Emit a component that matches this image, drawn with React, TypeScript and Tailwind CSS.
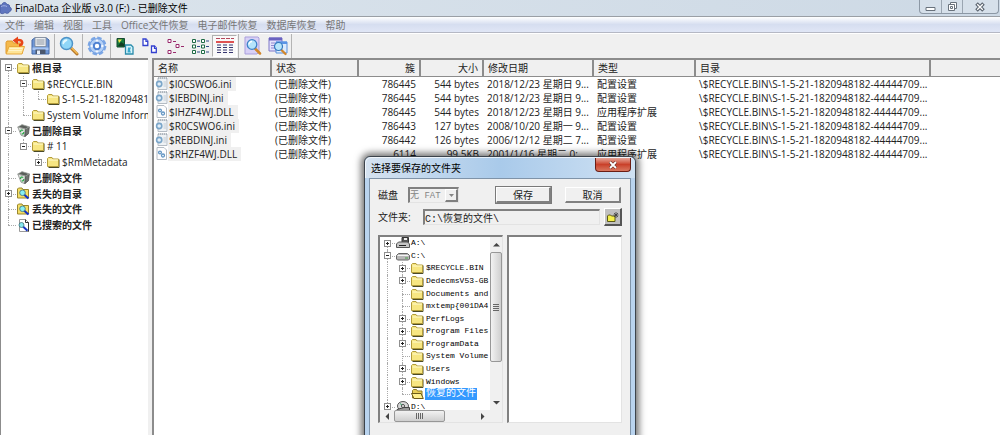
import clsx from "clsx";
import type { ReactNode } from "react";

/* ---------- toolbar icons ---------- */

const OpenIcon = () => (
  <svg width="21" height="20" viewBox="0 0 21 20">
    <path d="M1 6.500 2 5h5l1.500 2H17v10.500H1z" fill="#f5b94a" stroke="#e09a2c" />
    <path d="M4 10.500h15.500L17 18H1.200z" fill="#ffe596" stroke="#e8a83a" />
    <path d="M4.500 12.500h13M3.800 14.500h13" stroke="#fff4c8" />
    <path d="M14 9.500c4.500-1 4.500-5.500-1-5.500" fill="none" stroke="#e8451a" strokeWidth="2.400" />
    <path d="m7.500 4.500 5.500-4v8z" fill="#e8451a" />
  </svg>
);

const SaveIcon = () => (
  <svg width="19" height="20" viewBox="0 0 19 20">
    <path d="M1 4 3.500 2h12L18 4v14H1z" fill="#6f97d6" stroke="#4269a8" />
    <path d="M4 1.500h11v9H4z" fill="#eceff3" stroke="#7c8794" strokeWidth=".8" />
    <path d="M5.500 4h8M5.500 6h8M5.500 8h8" stroke="#8a94a0" />
    <path d="M1.500 11.500h16V14h-16z" fill="#a9c6f2" />
    <path d="M4.500 13.500h10V18h-10z" fill="#4b586e" />
    <path d="M6 14.500h3V18H6z" fill="#e8eef8" />
  </svg>
);

const Magnifier = () => (
  <svg width="20" height="20" viewBox="0 0 20 20">
    <path d="m12 12 6 6" stroke="#b5782a" strokeWidth="3" strokeLinecap="round" />
    <path d="m12.500 11.800 5.500 5.500" stroke="#f2b850" strokeWidth="1.500" strokeLinecap="round" />
    <circle cx="7.500" cy="7.500" r="6" fill="#8fd6f8" stroke="#4d93c8" strokeWidth="1.500" />
    <path d="M3.500 7.500a4 4 0 0 1 4-4.200c1.500 0 1 1.500 0 2S5 7 4.500 8.500z" fill="#e6f9ff" />
  </svg>
);

const GearIcon = () => (
  <svg width="20" height="20" viewBox="0 0 20 20">
    <circle cx="10" cy="10" r="8.200" fill="#a9c9f3" stroke="#7ba6e4" strokeWidth="2.400" strokeDasharray="4.400 2.040" />
    <circle cx="10" cy="10" r="7.200" fill="#b4d0f5" stroke="#6c9be0" strokeWidth=".8" />
    <g fill="#f4f8fe">
      <circle cx="10" cy="4.800" r="1.300" />
      <circle cx="10" cy="15.200" r="1.300" />
      <circle cx="4.800" cy="10" r="1.300" />
      <circle cx="15.200" cy="10" r="1.300" />
    </g>
    <circle cx="10" cy="10" r="3.200" fill="#fff" stroke="#4f82d2" strokeWidth="2" />
  </svg>
);

const LargeIconsIcon = () => (
  <svg width="18" height="18" viewBox="0 0 18 18">
    <path d="M1 1.500h7.500V10H1z" fill="#157a3c" stroke="#174a30" />
    <path d="M2 2.500h4L3 6z" fill="#f3e34d" />
    <path d="m2 9 3-4 3 2v2.500z" fill="#123d22" />
    <path d="M9.500 8H15l2 2v7H9.500z" fill="#d8f4fb" stroke="#2a8cab" strokeWidth="1.300" />
    <path d="M12 10.500h3l-1 2.500 1 2.500h-3.500z" fill="#36a9cd" />
  </svg>
);

const SmallIconsIcon = () => (
  <svg width="18" height="18" viewBox="0 0 18 18" fill="#fff" stroke="#3340cf" strokeWidth="1.300">
    <path d="M2 2h3l1.800 2v4.500H2z" />
    <path d="M5 2v2.300h2" />
    <path d="M10.500 9h3l1.800 2v4.500h-4.800z" />
    <path d="M13.500 9v2.300h2" />
  </svg>
);

const ListIcon = () => (
  <svg width="18" height="18" viewBox="0 0 18 18" fill="#fff" stroke="#9a2a6c">
    <path d="M2 2.500h3v3H2zM10 7.500h3v3h-3zM2 13.500h3v3H2z" />
    <path d="M7 4.500h3M15 9.500h3M7 15.500h3" strokeWidth="1.200" />
  </svg>
);

const ColumnsIcon = () => (
  <svg width="18" height="18" viewBox="0 0 18 18" fill="#fff" stroke="#1f6b45">
    <path d="M1.500 2.500h3v3h-3zM10.500 2.500h3v3h-3zM1.500 8h3v3h-3zM10.500 8h3v3h-3zM1.500 13.500h3v3h-3zM10.500 13.500h3v3h-3z" />
    <path d="M6 4h3M15 4h3M6 9.500h3M15 9.500h3M6 15h3M15 15h3" stroke="#2e4d86" />
  </svg>
);

const DetailsIcon = () => (
  <svg width="20" height="18" viewBox="0 0 20 18">
    <path d="M1 1.500h18" stroke="#b5475a" strokeDasharray="4 1" />
    <path d="M1 5h18" stroke="#d61a1a" strokeWidth="1.500" />
    <path d="M2 8h17M2 10.500h17M2 13h17M2 15.500h17" stroke="#35356f" strokeDasharray="4 2" />
  </svg>
);

const PreviewIcon = () => (
  <svg width="20" height="20" viewBox="0 0 20 20">
    <path d="M2 1h13l1 1v14l-2 2H2z" fill="#d8d0f6" stroke="#a99fdc" />
    <path d="m12 12.500 5 5" stroke="#d2862a" strokeWidth="2.500" strokeLinecap="round" />
    <circle cx="9" cy="8.500" r="4.800" fill="#b5e4fb" stroke="#3f83c8" strokeWidth="1.300" />
    <path d="M6 8.500A3 3 0 0 1 9 5.500" stroke="#fff" strokeWidth="1.300" fill="none" />
  </svg>
);

const FindIcon = () => (
  <svg width="20" height="20" viewBox="0 0 20 20">
    <path d="M1 2h13v13H1z" fill="#e5e2fb" stroke="#7f78c9" />
    <path d="M1 1.500h13v3H1z" fill="#6a62c0" />
    <path d="M3 7h4M3 9.500h3M3 12h4" stroke="#8f89d0" />
    <path d="M8 6h11v11H8z" fill="#dcebfd" stroke="#5a8fdc" />
    <path d="M8 5.500h11V8H8z" fill="#5a94e6" />
    <path d="m13 13.500 4.500 4.500" stroke="#d2862a" strokeWidth="2.300" strokeLinecap="round" />
    <circle cx="10.500" cy="10.500" r="4" fill="#b8e6fb" stroke="#3577bd" strokeWidth="1.200" />
  </svg>
);

/* ---------- tree icons ---------- */

const Folder = () => (
  <svg width="13" height="12" viewBox="0 0 13 12">
    <path d="M1.500 11.500h10.500V3.500" fill="none" stroke="#4a4a28" />
    <path d="M.5 10.500V2.500l1-1h3.500l1 1.500h5.500v7.500z" fill="#f7e682" stroke="#b39c3a" />
    <path d="M1.500 4h9.500" stroke="#fffbd0" />
  </svg>
);

const OpenFolder = () => (
  <svg width="13" height="12" viewBox="0 0 13 12">
    <path d="M1.500 10V2.500l1-1h3l1 1.500h4.500v7z" fill="#e8cf58" stroke="#8f7a22" />
    <path d="M.5 5.500h9.500l2.300 5H3z" fill="#fff08c" stroke="#6b5b1a" />
  </svg>
);

const RecycleBin = () => (
  <svg width="13" height="13" viewBox="0 0 13 13">
    <path d="M.8 3 4 11.200l3.800 1.500L8.500 5z" fill="#dfe2df" stroke="#7b807b" strokeWidth=".7" />
    <path d="M8.500 5 7.800 12.700l3.700-3L12.300 3z" fill="#6e726e" stroke="#444" strokeWidth=".7" />
    <path d="M.8 3 5 .6l7.300 2.200L8.500 5z" fill="#5a5e5a" stroke="#a5aaa5" strokeWidth=".8" />
    <path d="M3.500 8c0-2 1.300-2.500 2.700-1.500M6.800 8c0 1.700-1 2.200-2.200 1.800" fill="none" stroke="#28a846" strokeWidth="1.200" />
  </svg>
);

const LostFolder = () => (
  <svg width="13" height="13" viewBox="0 0 13 13">
    <path d="M.5 11V2l1-1h3.500l1 1.500h5.500V11z" fill="#f5df66" stroke="#9a862c" />
    <path d="m7 7.500 4.500 4" stroke="#1432c4" strokeWidth="2.200" />
    <circle cx="5.500" cy="5.800" r="2.800" fill="#86f0f4" stroke="#3b6f78" strokeWidth=".8" />
  </svg>
);

const SearchedFile = () => (
  <svg width="13" height="13" viewBox="0 0 13 13">
    <path d="M2.500.5h6l3 3v9h-9z" fill="#fff" stroke="#999" />
    <path d="M8.500.5v3h3v9" fill="none" stroke="#333" />
    <path d="m6 7.500 4.500 4.300" stroke="#1432c4" strokeWidth="2" />
    <circle cx="4.500" cy="6" r="2.500" fill="#86e8f0" stroke="#3b6f78" strokeWidth=".8" />
  </svg>
);

const Floppy = () => (
  <svg width="14" height="12" viewBox="0 0 14 12">
    <path d="M6 .5h6.500v5H6z" fill="#555" stroke="#333" />
    <path d="M8 1h3v2H8z" fill="#eee" />
    <path d="m.5 7 2-2h9l2 2v3.500H.5z" fill="#c4c4c4" stroke="#555" />
    <path d="M3 8.500h7" stroke="#222" />
  </svg>
);

const Disk = () => (
  <svg width="14" height="12" viewBox="0 0 14 12">
    <path d="m.5 5.500 2-2h9l2 2v3.500l-1 1h-11l-1-1z" fill="#b8b8b8" stroke="#666" />
    <path d="M1.500 5.500h11" stroke="#f5f5f5" />
    <path d="M9 8h3" stroke="#4aa04a" />
  </svg>
);

const CdDrive = () => (
  <svg width="14" height="12" viewBox="0 0 14 12">
    <ellipse cx="7" cy="5" rx="5.500" ry="4.500" fill="#d7d7d7" stroke="#555" />
    <circle cx="7" cy="5" r="1.500" fill="#fff" stroke="#444" />
    <path d="M8 6.500h5.500v4H1V8.500z" fill="#999" stroke="#444" />
    <path d="M4 2.500 6 4" stroke="#39a06b" />
  </svg>
);

const IniFile = () => (
  <svg width="13" height="13" viewBox="0 0 13 13">
    <path d="M3 1h9v11.500H3z" fill="#eef2f5" stroke="#b4bcc4" />
    <path d="M3 1h9" stroke="#8a949e" strokeDasharray="1 1" />
    <circle cx="4.200" cy="7" r="2.600" fill="#e2eef8" stroke="#7ba6c9" strokeWidth="1.600" />
    <path d="M8.500 5h2.500M8.500 7h2.500M8.500 9h2.500" stroke="#c3ccd5" />
  </svg>
);

const DllFile = () => (
  <svg width="13" height="13" viewBox="0 0 13 13">
    <path d="M2 .5h7l2.500 2.500v9.500H2z" fill="#fdfdfe" stroke="#b4bcc4" />
    <circle cx="5" cy="5.500" r="1.400" fill="#fff" stroke="#6396c4" strokeWidth="1.300" />
    <circle cx="8" cy="8.500" r="1.500" fill="#fff" stroke="#6396c4" strokeWidth="1.300" />
  </svg>
);

/* ---------- tree ---------- */

type Node = {
  // one letter per level: | line, . blank, r root, t tee, l last
  guides: string;
  box?: "+" | "-";
  icon: ReactNode;
  label: string;
  bold?: boolean;
  selected?: boolean;
};

const dirTree: Node[] = [
  { guides: "r", box: "-", icon: <Folder />, label: "根目录", bold: true },
  { guides: "|t", box: "-", icon: <Folder />, label: "$RECYCLE.BIN" },
  { guides: "||l", icon: <Folder />, label: "S-1-5-21-18209481" },
  { guides: "|l", icon: <Folder />, label: "System Volume Inform" },
  { guides: "t", box: "-", icon: <RecycleBin />, label: "已删除目录", bold: true },
  { guides: "|l", box: "-", icon: <Folder />, label: "# 11" },
  { guides: "|.l", box: "+", icon: <Folder />, label: "$RmMetadata" },
  { guides: "t", icon: <RecycleBin />, label: "已删除文件", bold: true },
  { guides: "t", box: "+", icon: <LostFolder />, label: "丢失的目录", bold: true },
  { guides: "t", icon: <LostFolder />, label: "丢失的文件", bold: true },
  { guides: "l", icon: <SearchedFile />, label: "已搜索的文件", bold: true },
];

const driveTree: Node[] = [
  { guides: "r", box: "+", icon: <Floppy />, label: "A:\\" },
  { guides: "t", box: "-", icon: <Disk />, label: "C:\\" },
  { guides: "|t", box: "+", icon: <Folder />, label: "$RECYCLE.BIN" },
  { guides: "|t", box: "+", icon: <Folder />, label: "DedecmsV53-GB" },
  { guides: "|t", icon: <Folder />, label: "Documents and" },
  { guides: "|t", icon: <Folder />, label: "mxtemp{001DA4" },
  { guides: "|t", box: "+", icon: <Folder />, label: "PerfLogs" },
  { guides: "|t", box: "+", icon: <Folder />, label: "Program Files" },
  { guides: "|t", box: "+", icon: <Folder />, label: "ProgramData" },
  { guides: "|t", icon: <Folder />, label: "System Volume" },
  { guides: "|t", box: "+", icon: <Folder />, label: "Users" },
  { guides: "|t", box: "+", icon: <Folder />, label: "Windows" },
  { guides: "|l", icon: <OpenFolder />, label: "恢复的文件", selected: true },
  { guides: "t", box: "+", icon: <CdDrive />, label: "D:\\" },
];

function Guide({ kind, box, label }: { kind: string; box?: "+" | "-"; label: string }) {
  return (
    <span className="relative flex h-full w-[15px] shrink-0 items-center justify-center">
      {kind !== "." && (
        <span
          className={clsx(
            "absolute left-[7px] border-l border-dotted border-[#aaa]",
            kind === "r" ? "top-1/2" : "top-0",
            kind === "l" ? "bottom-1/2" : "bottom-0"
          )}
        />
      )}
      {"rtl".includes(kind) && (
        <span className="absolute right-0 left-[7px] top-1/2 border-t border-dotted border-[#aaa]" />
      )}
      {box && (
        <button
          type="button"
          aria-label={label}
          className="relative flex h-[7px] w-[7px] items-center justify-center border border-[#8f8f8f] bg-white"
        >
          <span className="absolute h-px w-[3px] bg-[#222]" />
          {box === "+" && <span className="absolute h-[3px] w-px bg-[#222]" />}
        </button>
      )}
    </span>
  );
}

function TreeRow({ node }: { node: Node }) {
  const last = node.guides.length - 1;
  return (
    <li className="flex min-h-0 items-center whitespace-nowrap">
      {node.guides.split("").map((kind, i) => (
        <Guide key={i} kind={kind} box={i === last ? node.box : undefined} label={node.label} />
      ))}
      <span className="flex w-[15px] shrink-0 justify-center">{node.icon}</span>
      <span
        className={clsx(
          "px-px leading-3",
          node.bold && "font-bold",
          node.selected && "bg-[#3399ff] text-white"
        )}
      >
        {node.label}
      </span>
    </li>
  );
}

/* ---------- file list ---------- */

const dir = "\\$RECYCLE.BIN\\S-1-5-21-1820948182-44444709...";

const files = [
  { name: "$I0CSWO6.ini", cluster: "786445", size: "544 bytes", date: "2018/12/23 星期日 9...", type: "配置设置" },
  { name: "$IEBDINJ.ini", cluster: "786445", size: "544 bytes", date: "2018/12/23 星期日 9...", type: "配置设置" },
  { name: "$IHZF4WJ.DLL", cluster: "786445", size: "544 bytes", date: "2018/12/23 星期日 9...", type: "应用程序扩展" },
  { name: "$R0CSWO6.ini", cluster: "786443", size: "127 bytes", date: "2008/10/20 星期一 9...", type: "配置设置" },
  { name: "$REBDINJ.ini", cluster: "786442", size: "126 bytes", date: "2006/12/12 星期二 7...", type: "配置设置" },
  { name: "$RHZF4WJ.DLL", cluster: "6114", size: "99.5KB", date: "2001/1/16 星期二 0:...", type: "应用程序扩展" },
];

const columns = [
  { title: "名称", width: "w-[117px]" },
  { title: "状态", width: "w-[87px]" },
  { title: "簇", width: "w-[62px]", right: true },
  { title: "大小", width: "w-[63px]", right: true },
  { title: "修改日期", width: "w-[110px]" },
  { title: "类型", width: "w-[102px]" },
  { title: "目录", width: "w-[235px]" },
];

function FileTable() {
  return (
    <table className="w-full table-fixed border-collapse whitespace-nowrap">
      <thead>
        <tr className="h-4 bg-[#f0f0f0]">
          {columns.map((col) => (
            <th
              key={col.title}
              className={clsx(
                "border-r-2 border-b border-[#8c8c8c] px-1 py-0 font-normal leading-3",
                col.width,
                col.right ? "text-right" : "text-left"
              )}
            >
              {col.title}
            </th>
          ))}
          <td className="border-b border-[#8c8c8c]" />
        </tr>
      </thead>
      <tbody>
        {files.map((file) => (
          <tr key={file.name} className="h-[14px] leading-[14px]">
            <td className="p-0">
              <div className="flex items-center">
                <span className="flex w-[14px] shrink-0 justify-center">
                  {file.name.endsWith(".ini") ? <IniFile /> : <DllFile />}
                </span>
                <span className="bg-[#f0f0f0] pr-1 pl-px">{file.name}</span>
              </div>
            </td>
            <td className="px-1 py-0">(已删除文件)</td>
            <td className="px-1 py-0 text-right">{file.cluster}</td>
            <td className="px-1 py-0 text-right">{file.size}</td>
            <td className="px-1 py-0">{file.date}</td>
            <td className="px-1 py-0">{file.type}</td>
            <td className="px-1 py-0">{dir}</td>
            <td />
          </tr>
        ))}
      </tbody>
    </table>
  );
}

/* ---------- dialog ---------- */

const sunken = "border border-t-2 border-l-2 border-[#e3e3e3] border-t-[#808080] border-l-[#808080]";
const raised = "border border-r-2 border-b-2 border-white border-r-[#808080] border-b-[#808080] bg-[#f0f0f0]";

const Arrow = ({ d }: { d: string }) => (
  <svg width="7" height="7" viewBox="0 0 7 7" className="shrink-0">
    <path d={d} fill="#444" />
  </svg>
);

function SaveDialog() {
  return (
    <section
      role="dialog"
      aria-label="选择要保存的文件夹"
      className="absolute top-[156px] -bottom-4 left-1/2 flex w-[272px] -translate-x-1/2 flex-col rounded-t-md border border-[#3c434b] bg-[#b9d3ee] px-1 shadow-[0_0_7px_3px_rgba(0,0,0,0.55)]"
    >
      <header className="-mx-1 flex h-[21px] items-start justify-between rounded-t-md border-t border-l border-white/70 bg-linear-to-r from-[#d5e2f0] via-[#a9caea] to-[#cfe1f3] pr-1 pl-[5px]">
        <h2 className="pt-1 leading-3 text-black">选择要保存的文件夹</h2>
        <button
          type="button"
          aria-label="关闭"
          className="flex h-[14px] w-9 items-center justify-center rounded-b border border-t-0 border-[#6b1d14] bg-linear-to-b from-[#e5a599] via-[#c9402a] to-[#d8765f]"
        >
          <svg width="10" height="8" viewBox="0 0 10 8">
            <path d="m2 1 6 6M8 1 2 7" stroke="#5c2a24" strokeWidth="3" />
            <path d="m2 1 6 6M8 1 2 7" stroke="#fff" strokeWidth="1.800" />
          </svg>
        </button>
      </header>
      <div className="flex flex-1 flex-col border border-[#7f93a8] bg-[#f0f0f0] px-2 pt-2">
        <div className="flex items-center">
          <label htmlFor="disk" className="w-[30px] leading-3">
            磁盘
          </label>
          <div className={clsx("relative flex h-4 w-[51px]", sunken)}>
            <select
              id="disk"
              disabled
              className="w-full appearance-none bg-[#f0f0f0] font-['Liberation_Mono','Noto_Sans_CJK_SC',monospace] text-[9px] leading-3 text-[#858585] opacity-100"
            >
              <option>无 FAT</option>
            </select>
            <span className={clsx("pointer-events-none absolute inset-y-0 right-0 flex w-[13px] items-center justify-center", raised)}>
              <svg width="5" height="3" viewBox="0 0 5 3">
                <path d="M0 0h5L2.500 3z" fill="#858585" />
              </svg>
            </span>
          </div>
          <button
            type="button"
            className={clsx("ml-auto h-4 w-[55px] leading-3 outline outline-[#7a7a7a]", raised)}
          >
            保存
          </button>
          <button type="button" className={clsx("mr-px ml-[14px] h-4 w-[56px] leading-3", raised)}>
            取消
          </button>
        </div>
        <div className="mt-[5px] flex items-center">
          <label htmlFor="folder" className="w-[45px] leading-3">
            文件夹:
          </label>
          <input
            id="folder"
            type="text"
            readOnly
            value="C:\恢复的文件\"
            className={clsx(
              "h-4 min-w-0 flex-1 bg-[#f0f0f0] font-['Liberation_Mono','Noto_Sans_CJK_SC',monospace] leading-3 outline-none",
              sunken
            )}
          />
          <button
            type="button"
            aria-label="新建文件夹"
            className="ml-1 flex h-[18px] w-[18px] items-center justify-center border border-r-2 border-b-2 border-white border-r-[#555] border-b-[#555] bg-[#c0c0c0]"
          >
            <svg width="13" height="12" viewBox="0 0 13 12">
              <path d="M1.500 10.500V5l1-1h2l1 1h3.500v5.500z" fill="#f4ef4a" stroke="#5c5a14" />
              <path d="M10 1v6M7.500 4h5M8 2l4 4M12 2 8 6" stroke="#3c3c3c" strokeWidth=".8" />
            </svg>
          </button>
        </div>
        <div className="mt-[9px] flex h-[188px] gap-1">
          <div className={clsx("flex w-[125px] flex-col bg-white", sunken)}>
            <div className="flex min-h-0 flex-1">
              <div className="min-w-0 flex-1 overflow-hidden">
                <ul className="grid h-44 auto-rows-fr font-['Liberation_Mono','Noto_Sans_CJK_SC',monospace] text-[8px] text-black [&>li:nth-child(13)]:text-[10px]">
                  {driveTree.map((node) => (
                    <TreeRow key={node.label} node={node} />
                  ))}
                </ul>
              </div>
              <div className="flex w-3 flex-col items-center bg-[#f0f0f0] py-1">
                <Arrow d="M0 5.500h7L3.500 2z" />
                <div className="mt-1 flex h-[110px] w-full items-center justify-center rounded-xs border border-[#979797] bg-linear-to-r from-[#f2f2f2] to-[#cfcfcf]">
                  <span className="flex h-[7px] w-[6px] flex-col justify-between border-y border-[#666]">
                    <span className="mt-px h-px bg-[#666]" />
                    <span className="mb-px h-px bg-[#666]" />
                  </span>
                </div>
                <span className="flex-1" />
                <Arrow d="M0 2h7L3.500 5.500z" />
              </div>
            </div>
            <div className="flex h-3 items-center bg-[#f0f0f0]">
              <span className="flex w-[14px] justify-center">
                <Arrow d="M5 0v7L1.500 3.500z" />
              </span>
              <div className="flex h-full w-[51px] items-center justify-center rounded-xs border border-[#979797] bg-linear-to-b from-[#f2f2f2] to-[#cfcfcf]">
                <span className="flex h-[6px] w-[7px] justify-between border-x border-[#666]">
                  <span className="ml-px w-px bg-[#666]" />
                  <span className="mr-px w-px bg-[#666]" />
                </span>
              </div>
              <span className="mr-4 ml-auto">
                <Arrow d="M2 0v7l3.500-3.500z" />
              </span>
            </div>
          </div>
          <div className={clsx("flex-1 bg-white", sunken)} />
        </div>
      </div>
    </section>
  );
}

/* ---------- window ---------- */

const menus = ["文件", "编辑", "视图", "工具", "Office文件恢复", "电子邮件恢复", "数据库恢复", "帮助"];

const tools = [
  [
    { label: "打开", icon: <OpenIcon /> },
    { label: "保存", icon: <SaveIcon /> },
  ],
  [{ label: "查找", icon: <Magnifier /> }],
  [{ label: "设置", icon: <GearIcon /> }],
  [
    { label: "大图标", icon: <LargeIconsIcon /> },
    { label: "小图标", icon: <SmallIconsIcon /> },
    { label: "列表", icon: <ListIcon /> },
    { label: "平铺", icon: <ColumnsIcon /> },
    { label: "详细信息", icon: <DetailsIcon />, pressed: true },
  ],
  [
    { label: "预览", icon: <PreviewIcon /> },
    { label: "搜索", icon: <FindIcon /> },
  ],
];

export default function App() {
  return (
    <div className="relative flex h-screen flex-col overflow-hidden bg-white font-['Open_Sans','Noto_Sans_CJK_SC',sans-serif] text-[10px] text-[#222]">
      <header className="flex h-[17px] items-start justify-between border-b border-[#9a9fa5] bg-linear-to-r from-[#dbe4ec] to-[#cdd9e5]">
        <div className="flex items-center gap-[3px]">
          <svg width="12" height="15" viewBox="0 0 12 15">
            <path d="M0 4h2c0-3 4-3.500 5-.5 2-.5 3 1 2.500 2.500 2.500.5 2.500 4 0 4.500-.5 2-3 2.500-4.500 1-1.500 1.500-4 1.500-5 0z" fill="#5f76bf" stroke="#4458a0" strokeWidth=".8" />
            <path d="M1 5.500c2-1 4-1 6 0" stroke="#a4b4e6" fill="none" />
          </svg>
          <h1 className="leading-4 text-black">FinalData 企业版 v3.0 (F:) - 已删除文件</h1>
        </div>
        <div className="mr-px flex h-[14px] w-20 divide-x divide-[#9aa5b1] rounded-b border border-t-0 border-[#8c98a5] bg-[#d6e0ea]">
          <button type="button" aria-label="最小化" className="flex w-[22px] items-center justify-center">
            <svg width="11" height="10" viewBox="0 0 11 10">
              <path d="M1 5.500h9v3H1z" fill="#fff" stroke="#69727c" />
            </svg>
          </button>
          <button type="button" aria-label="还原" className="flex w-[21px] items-center justify-center">
            <svg width="11" height="10" viewBox="0 0 11 10" fill="#fff" stroke="#69727c">
              <path d="M3.500.5h6v6h-6z" />
              <path d="M1.500 2.500h6v6h-6z" />
              <path d="M3.500 4.500h2v2h-2z" />
            </svg>
          </button>
          <button type="button" aria-label="关闭" className="flex flex-1 items-center justify-center">
            <svg width="11" height="10" viewBox="0 0 11 10">
              <path d="m1.500 1.500 7 7M8.500 1.500l-7 7" stroke="#5c6570" strokeWidth="3.600" />
              <path d="m2.200 2.200 5.600 5.600M7.800 2.200 2.200 7.800" stroke="#fff" strokeWidth="1.300" />
            </svg>
          </button>
        </div>
      </header>

      <nav className="flex h-4 items-center gap-[9px] border-b border-[#b5b8c4] bg-linear-to-b from-white via-[#d6def0] to-[#e0e6f6] pl-[5px] text-[#777]">
        {menus.map((menu) => (
          <button key={menu} type="button" className="leading-3">
            {menu}
          </button>
        ))}
      </nav>

      <div className="flex h-[25px] items-center border-t border-white bg-[#f0f0f0] pl-[3px]">
        {tools.map((group, i) => (
          <div key={i} className="flex h-full items-center">
            {group.map((tool) => (
              <button
                key={tool.label}
                type="button"
                aria-label={tool.label}
                className={clsx(
                  "flex h-[22px] w-[25px] items-center justify-center",
                  tool.pressed && "border border-[#b0b0b0] border-r-white border-b-white bg-[#f9f9f9]"
                )}
              >
                {tool.icon}
              </button>
            ))}
            <span className="mx-px h-full w-px bg-[#b4b4b4]" />
          </div>
        ))}
      </div>

      <main className="flex min-h-0 flex-1 bg-[#f0f0f0]">
        <aside className="w-[148px] shrink-0 overflow-hidden border-t-2 border-l border-[#8c8c8c] bg-white">
          <ul className="grid h-[173px] auto-rows-fr">
            {dirTree.map((node) => (
              <TreeRow key={node.label} node={node} />
            ))}
          </ul>
        </aside>
        <div className="ml-1 min-w-0 flex-1 overflow-hidden border-t-2 border-l-2 border-[#8c8c8c] bg-white">
          <FileTable />
        </div>
      </main>

      <SaveDialog />
    </div>
  );
}
